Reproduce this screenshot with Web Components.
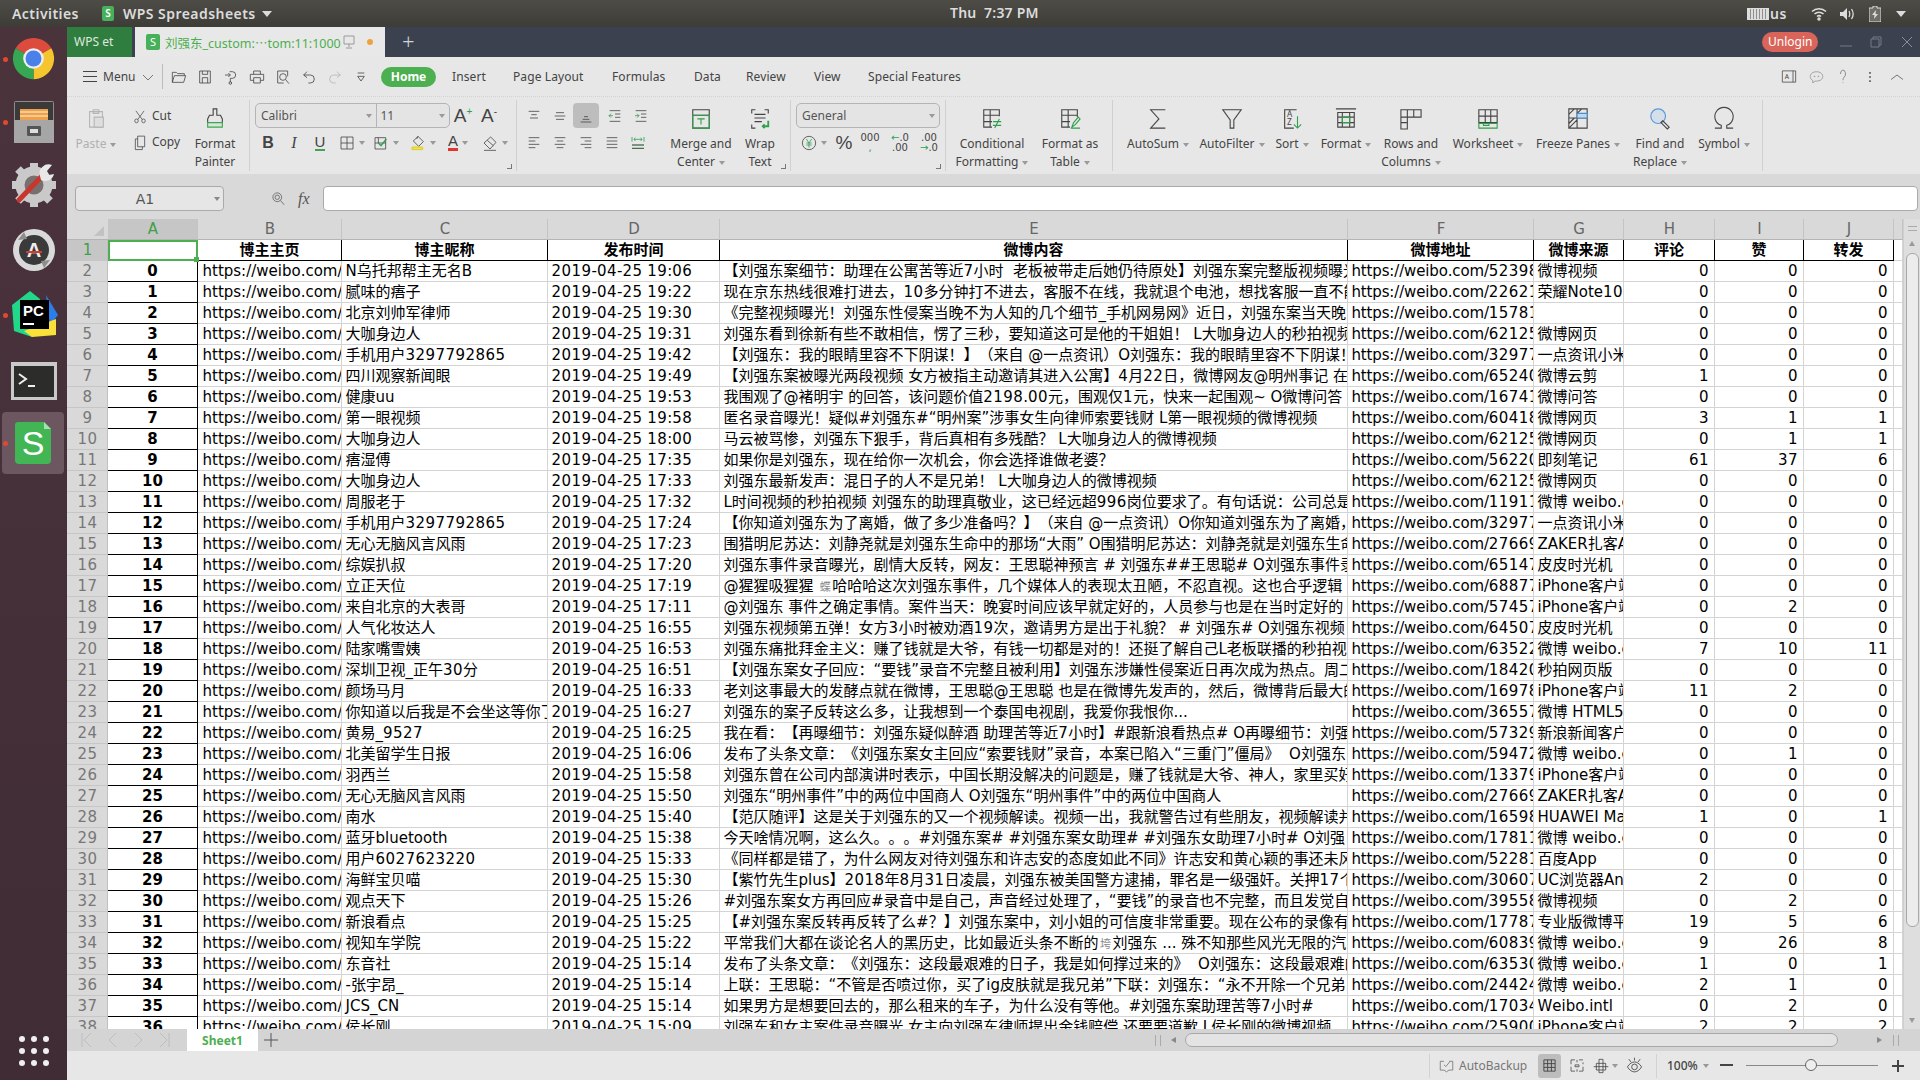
<!DOCTYPE html>
<html lang="zh">
<head>
<meta charset="utf-8">
<title>WPS Spreadsheets</title>
<style>
  html, body { margin: 0; width: 1920px; height: 1080px; overflow: hidden; background: #e7e7e7; }
  .screen { display: flex; height: 1053px; }
  .app { display: flex; flex-direction: column; width: 1853px; }
</style>
</head>
<body>
<desktop-bar></desktop-bar>
<div class="screen">
  <app-launcher></app-launcher>
  <div class="app">
    <tab-strip></tab-strip>
    <quick-bar></quick-bar>
    <wps-ribbon></wps-ribbon>
    <formula-bar></formula-bar>
    <sheet-view></sheet-view>
    <sheet-tabs></sheet-tabs>
    <status-bar></status-bar>
  </div>
</div>
<script>
const UI_FONT = `"Noto Sans", "Noto Sans CJK SC", sans-serif`;
const CELL_FONT = `"DejaVu Sans", "Noto Sans CJK SC", sans-serif`;
const GREEN = '#4caf50';

const ICONS = {
  open: '<path d="M2 20V5h6l2 2h10v3M2 20l3-10h17l-3 10z"/>',
  save: '<path d="M4 3h16v18H4zM8 3v5h8V3M8 21v-8h8v8"/>',
  saveas: '<path d="M10 4h4a5 5 0 0 1 0 10h-3v6M3 9h8M8 6l3 3-3 3"/><circle cx="11" cy="21" r="2"/>',
  print: '<path d="M7 8V3h10v5M7 17H2V8h20v9h-5M7 13h10v8H7z"/>',
  preview: '<path d="M19 11V3H4v18h9"/><circle cx="12" cy="12" r="5"/><path d="M16 16l5 6"/>',
  undo: '<path d="M9 4L4 9l5 4M4 9h10a5 5 0 0 1 0 12h-3"/>',
  redo: '<path d="M15 4l5 5-5 4M20 9H10a5 5 0 0 0 0 12h3"/>',
  qat: '<path d="M7 6h10M7 11h10l-5 7z"/>',
  paste: '<path d="M5 5h14v17H5zM9 3h6v4H9z" stroke="#b5b5b5"/><path d="M10 11h10v11H10z" fill="#dedede" stroke="#b5b5b5"/>',
  cut: '<circle cx="6" cy="19" r="3"/><circle cx="18" cy="19" r="3"/><path d="M8 17L19 3M16 17L5 3"/>',
  copy: '<path d="M8 3h12v15H8z"/><path d="M8 7H4v15h12v-4"/>',
  brush: '<path d="M10 2h4v7h4l2 4v4H4v-4l2-4h4z"/><path d="M4 17h16v5H4z" fill="#d5e8d6" stroke="#3fa554"/>',
  merge: '<path d="M3 3h18v20H3zM3 9h18"/><path d="M3 9h18v14H3z" stroke="#2fa04c"/><path d="M8 13h8M12 13v6" stroke="#2fa04c"/>',
  wrap: '<path d="M3 7V3h4M17 3h4v4M3 19v4h4M6 8h12M6 12h12M6 16h8"/><path d="M21 15v6h-6M17 19l-2 2 2 2" stroke="#2fa04c" stroke-width="2"/>',
  cond: '<path d="M20 10V3H3v19h9M3 9h17M10 3v19M3 16h9"/><path d="M13 16h9M13 20h9M20 13l-5 10" stroke="#2fa04c"/>',
  table: '<path d="M20 11V3H3v19h9M3 9h17M10 3v19M3 16h9"/><path d="M14 22l2-5 5-6 2 2-5 6zM13 23h10" stroke="#2fa04c"/>',
  sum: '<path d="M20 3H4l9 10-9 10h16"/>',
  filter: '<path d="M2 3h20l-8 11v9h-4V14z"/>',
  sort: '<path d="M17 3H4v20h10"/><text x="6.5" y="11" font-size="9" stroke="none" fill="#444">A</text><text x="6.5" y="20" font-size="9" stroke="none" fill="#444">Z</text><path d="M18 10v13M14 19l4 4 4-4" stroke="#2fa04c"/>',
  format: '<path d="M1 2h22M3 6h18v16H3zM3 11h18M3 17h18M8 6v16M16 6v16"/><path d="M8 11h8v6H8z" stroke="#2fa04c"/>',
  rows: '<path d="M1 3h22v8H8v13H1zM1 11h7M1 17h7M8 3v8M15 3v8"/>',
  sheet: '<path d="M2 3h20v14H2zM2 10h20M9 3v14M15 3v14"/><path d="M2 18h20v5H2zM7 18v2h6v-2" stroke="#2fa04c"/>',
  freeze: '<path d="M2 2h20v21H2zM2 12h20M11 2v21M2 8l6-6M11 7l5-5M2 18l6-6M2 23l9-9"/><path d="M11 7h11v5H11z" fill="#bfd8ee" stroke="#4a90d0"/>',
  find: '<circle cx="10" cy="10" r="8" fill="#d5dfea" stroke="#5a9ad6" stroke-width="1.3"/><path d="M15 15l7 7-2 2-7-7z"/>',
  symbol: '<path d="M2 23h7v-3a10 10 0 1 1 6 0v3h7"/>',
  borders: '<path d="M3 3h18v18H3zM12 3v18M3 12h18"/>',
  fillcolor: '<path d="M3 4h16v17H3zM3 12h16"/><path d="M8 12l4 4 8-10" stroke="#2fa04c" stroke-width="2"/><path d="M8 4v8"/>',
  bucket: '<path d="M12 2l8 8-7 7-8-8zM12 2l-2 4"/><path d="M3 18h16v4H3z" fill="#f1e23a" stroke="#d8c92a"/>',
  eraser: '<path d="M13 3l8 8-9 10-9-9zM8 8l9 8M3 23h18"/>',
  align1: '<path d="M4 4h16M8 9h8M6 14h12" transform="translate(0 1)"/>',
  align2: '<path d="M6 7h12M4 12h16M6 17h12"/>',
  align3: '<path d="M9 13h6M7 17h10M4 21h16"/>',
  indentL: '<path d="M4 4h16M12 9h8M12 14h8M4 20h16"/><path d="M9 11.500H3M6 8.500l-3 3 3 3" stroke="#2fa04c"/>',
  indentR: '<path d="M4 4h16M4 20h16M12 9h8M12 14h8"/><path d="M3 11.500h6M6 8.500l3 3-3 3" stroke="#2fa04c"/>',
  left: '<path d="M4 4h16M4 9h10M4 14h16M4 19h10"/>',
  center: '<path d="M4 4h16M7 9h10M4 14h16M7 19h10"/>',
  right: '<path d="M4 4h16M10 9h10M4 14h16M10 19h10"/>',
  just: '<path d="M4 4h16M4 9h16M4 14h16M4 19h16"/>',
  dist: '<path d="M3 15h18M3 20h18M3 3v7M21 3v7M6 6.500h12M8 4l-2 2.500L8 9M16 4l2 2.500L16 9" stroke="#2fa04c"/><path d="M3 15h18M3 20h18"/>',
  yen: '<circle cx="12" cy="12" r="10"/><path d="M8 6l4 6 4-6M12 12v7M8 12h8M8 15h8" stroke="#2fa04c"/>',
  zoomf: '<circle cx="10" cy="10" r="7"/><circle cx="10" cy="10" r="3.500"/><path d="M15 15l6 7"/>',
  note: '<path d="M2 3h20v18H2zM18 3v18"/><text x="5.500" y="16" font-size="10" stroke="none" fill="#444">A</text>',
  chat: '<path d="M12 3c6 0 10 3.500 10 8s-4 8-10 8H10l-4 3v-4c-2.500-1.500-4-4-4-7 0-4.500 4-8 10-8z"/><circle cx="9" cy="11" r=".7"/><circle cx="15" cy="11" r=".7"/>',
  collapse: '<path d="M3 17l9-9 9 9"/>',
  dotsv: '<circle cx="12" cy="5" r="1" fill="#444"/><circle cx="12" cy="12" r="1" fill="#444"/><circle cx="12" cy="19" r="1" fill="#444"/>',
  question: '<path d="M6 8a6 6 0 1 1 9 5c-2 1.300-3 2.500-3 5M12 21.500v1"/>',
  backup: '<path d="M8 4H2v15h6l4 3 4-3h6V4h-6"/><path d="M8 10l3 3 6-8" />',
  gridview: '<path d="M3 3h18v18H3zM3 9h18M3 15h18M9 3v18M15 3v18" stroke-width="1.500"/>',
  pagebreak: '<path d="M9 3H3v7M15 3h6M21 7v3M3 14v7h6M15 21h6v-7M9 11h6v3H9zM12 3v4M12 18v4"/>',
  pageview: '<path d="M5 8h14v10H5zM9 2h6v20H9zM1 13h22"/>',
  eye: '<path d="M2 14c3-5 7-7 10-7s7 2 10 7c-3 5-7 7-10 7s-7-2-10-7z"/><circle cx="12" cy="14" r="4"/><path d="M4 3l3 4M12 1v4M20 3l-3 4"/>'
};

// stroked svg icon from the table above
function icon(name, w = 16, h = w, color = '#444') {
  return `<svg width="${w}" height="${h}" viewBox="0 0 24 24" preserveAspectRatio="none" fill="none" stroke="${color}" stroke-width="1.200" style="display:block;overflow:visible">${ICONS[name]}</svg>`;
}

const CARET_CSS = `.caret { display: inline-block; width: 0; height: 0; border: 3px solid transparent; border-top: 4px solid #9a9a9a; border-bottom: 0; margin-left: 4px; vertical-align: middle; }`;

class DesktopBar extends HTMLElement {
  constructor() {
    super();
    this.attachShadow({ mode: 'open' }).innerHTML = `
      <style>
        :host { display: flex; align-items: center; height: 27px; background: linear-gradient(#4e4c46, #3d3c37); color: #dcdcdc; font: 600 14px ${UI_FONT}; letter-spacing: .45px; }
        .activities { margin-left: 12px; width: 90px; }
        .logo { width: 12px; height: 15px; background: #46b05a; border-radius: 2px; color: #fff; font-size: 10px; line-height: 15px; text-align: center; letter-spacing: 0; }
        .name { margin-left: 9px; }
        .drop { width: 0; height: 0; border: 5px solid transparent; border-top: 6px solid #dcdcdc; border-bottom: 0; margin-left: 6px; }
        .clock { position: absolute; left: 950px; top: 0; line-height: 25px; white-space: pre; letter-spacing: .2px; }
        .tray { margin-left: auto; display: flex; align-items: center; margin-right: 14px; }
        .keys { width: 22px; height: 12px; background: repeating-linear-gradient(90deg, #ddd 0 2px, #8f8f8f 2px 3px); border: 1px solid #ddd; box-sizing: border-box; }
        .us { width: 41px; margin-left: 1px; }
        svg { display: block; }
      </style>
      <span class="activities">Activities</span>
      <span class="logo">S</span>
      <span class="name">WPS Spreadsheets</span>
      <span class="drop"></span>
      <span class="clock">Thu  7:37 PM</span>
      <div class="tray">
        <span class="keys"></span><span class="us">us</span>
        <svg width="16" height="14" viewBox="0 0 16 14" fill="none" stroke="#ddd" stroke-width="1.500" style="margin-right:12px"><path d="M1 4.500a10 10 0 0 1 14 0M3.500 7a6.500 6.500 0 0 1 9 0M6 9.500a3 3 0 0 1 4 0"/><circle cx="8" cy="12" r="1" fill="#ddd"/></svg>
        <svg width="16" height="14" viewBox="0 0 16 14" style="margin-right:14px"><path d="M1 5h3l4-4v12l-4-4H1z" fill="#ddd"/><path d="M10 4c1 2 1 4 0 6M12.500 2c2 3 2 7 0 10" fill="none" stroke="#ddd" stroke-width="1.300"/></svg>
        <svg width="12" height="16" viewBox="0 0 12 16" style="margin-right:14px"><path d="M4 0h4v2h4v14H0V2h4z" fill="#6f6e69" stroke="#ddd"/><path d="M7 4L3 9h2.500L5 13l4-5H6.500z" fill="#ddd"/></svg>
        <span class="drop" style="margin:0 0 0 1px"></span>
      </div>`;
  }
}

const LAUNCHER_ICONS = [
  { dot: true, tall: 63, svg: `<svg width="45" height="45" viewBox="0 0 48 48"><path d="M24 24L5 13A22 22 0 0 1 43 13z" fill="#dd4b3d"/><path d="M24 24L43 13A22 22 0 0 1 24 46z" fill="#f5c52f"/><path d="M24 24V46A22 22 0 0 1 5 13z" fill="#36a853"/><circle cx="24" cy="24" r="11" fill="#eee"/><circle cx="24" cy="24" r="8.500" fill="#4a80ea"/></svg>` },
  { dot: true, tall: 63, svg: `<svg width="44" height="44" viewBox="0 0 44 44"><rect x="2" y="1" width="40" height="42" rx="2" fill="#8c8c8c"/><rect x="3" y="2" width="38" height="18" fill="#3b3a38"/><rect x="8" y="9" width="28" height="11" fill="#efa04b"/><path d="M8 12h28M8 16h28" stroke="#fff2dc"/><rect x="2" y="20" width="40" height="23" fill="#a6a6a6"/><rect x="15" y="26" width="14" height="10" rx="1" fill="#555"/><rect x="18" y="29" width="8" height="4" fill="#ddd"/></svg>` },
  { tall: 64, svg: `<svg width="46" height="46" viewBox="0 0 46 46"><g stroke="#c9c9c9" stroke-width="8"><path d="M23 1v8M23 37v8M1 23h8M37 23h8M7 7l6 6M33 33l6 6M7 39l6-6"/></g><circle cx="23" cy="23" r="14" fill="#77706f" stroke="#c9c9c9" stroke-width="9"/><path d="M8 38L31 14" stroke="#c8372d" stroke-width="5" stroke-linecap="round"/><path d="M29 14a9 9 0 0 1 12-11l-5 6 2 4 5-1a9 9 0 0 1-13 6z" fill="#e8e8e8"/></svg>` },
  { tall: 66, svg: `<svg width="44" height="44" viewBox="0 0 44 44"><circle cx="22" cy="22" r="21" fill="#d9d9d9"/><circle cx="22" cy="22" r="15" fill="#3b3a3a"/><path d="M6 12l6-8 3 7zM38 32l-6 8-3-7z" fill="#8d8d8d"/><text x="22" y="29" text-anchor="middle" fill="#eee" font-family="Liberation Sans" font-weight="700" font-size="20">A</text><path d="M14 24h16" stroke="#d9382e" stroke-width="2"/></svg>` },
  { dot: true, tall: 64, svg: `<svg width="48" height="48" viewBox="0 0 48 48"><path d="M2 14L20 0l10 8-8 38L4 40z" fill="#21d789"/><path d="M36 4l12 20-8 10z" fill="#2b7de9"/><path d="M14 40l32-12v16l-24 2z" fill="#f9e13a"/><rect x="10" y="9" width="29" height="29" fill="#000"/><text x="13" y="25" fill="#fff" font-family="Liberation Sans" font-weight="700" font-size="15">PC</text><path d="M13 33h11" stroke="#fff" stroke-width="2"/></svg>` },
  { tall: 65, nudge: 3, svg: `<svg width="46" height="38" viewBox="0 0 46 38"><rect x="0" y="0" width="46" height="38" fill="#c9c9c9"/><rect x="3" y="4" width="40" height="31" fill="#2c2c2a"/><path d="M8 12l7 5-7 5" fill="none" stroke="#eee" stroke-width="2"/><path d="M17 24h7" stroke="#eee" stroke-width="2"/></svg>` },
  { active: true, dot: true, tall: 62, svg: `<svg width="36" height="42" viewBox="0 0 36 42"><path d="M3 0h26l7 7v31a4 4 0 0 1-4 4H4a4 4 0 0 1-4-4V3a3 3 0 0 1 3-3z" fill="#42b554"/><path d="M29 0l7 7h-7z" fill="#a7e0af"/><text x="18" y="33" text-anchor="middle" fill="#fff" font-family="Liberation Sans" font-size="34">S</text></svg>` }
];

class AppLauncher extends HTMLElement {
  constructor() {
    super();
    const items = LAUNCHER_ICONS.map((item) => `
      <div class="slot ${item.active ? 'active' : ''}" style="height:${item.tall}px;box-sizing:border-box;padding-top:${item.nudge || 0}px">
        ${item.dot ? '<i class="dot"></i>' : ''}${item.svg}
      </div>`).join('');
    this.attachShadow({ mode: 'open' }).innerHTML = `
      <style>
        :host { display: flex; flex-direction: column; width: 67px; flex: none; background: linear-gradient(#4b333c, #3f2c35); }
        .slot { position: relative; display: flex; align-items: center; justify-content: center; }
        .active { margin: 0 3px 0 2px; background: #6c5660; border-radius: 4px; }
        .dot { position: absolute; left: 3px; top: 50%; width: 5px; height: 5px; margin-top: -2px; border-radius: 50%; background: #e0492f; }
        .active .dot { left: 1px; }
        .apps { margin-top: auto; margin-bottom: 14px; display: grid; grid-template-columns: repeat(3, 6px); gap: 6px; justify-content: center; }
        .apps i { width: 6px; height: 6px; border-radius: 50%; background: #efefef; }
      </style>
      ${items}
      <div class="apps">${'<i></i>'.repeat(9)}</div>`;
  }
}

class TabStrip extends HTMLElement {
  constructor() {
    super();
    this.attachShadow({ mode: 'open' }).innerHTML = `
      <style>
        :host { display: flex; align-items: stretch; height: 30px; flex: none; background: #3c4150; font: 12px ${UI_FONT}; }
        .et { width: 65px; background: #2f7d3f; color: #dfe9df; line-height: 30px; padding-left: 7px; box-sizing: border-box; }
        .doc { display: flex; align-items: center; width: 250px; margin-left: 3px; background: #e8e8e8; color: ${GREEN}; padding-left: 11px; box-sizing: border-box; }
        .file { width: 14px; height: 16px; border-radius: 2px; background: #46b05a; color: #fff; font-size: 11px; line-height: 16px; text-align: center; margin-right: 5px; }
        .title { width: 177px; white-space: nowrap; overflow: hidden; font-size: 12.500px; }
        .dot { width: 6px; height: 6px; border-radius: 50%; background: #eea23f; margin-left: 11px; }
        .plus { width: 1px; margin-left: 17px; color: #cfd2d8; font-size: 22px; font-weight: 300; line-height: 28px; }
        .right { margin-left: auto; display: flex; align-items: center; margin-right: 7px; }
        .pill { background: #d9645a; color: #fff; border-radius: 10px; height: 20px; line-height: 20px; padding: 0 6px; width: 44px; text-align: center; margin-right: 22px; }
        svg { display: block; }
      </style>
      <div class="et">WPS et</div>
      <div class="doc">
        <span class="file">S</span>
        <span class="title">刘强东_custom:⋯tom:11:1000</span>
        <svg width="14" height="14" viewBox="0 0 14 14" fill="none" stroke="#9a9a9a"><path d="M2 1h10v8H2zM7 9v3M4 13h6"/></svg>
        <span class="dot"></span>
      </div>
      <div class="plus">+</div>
      <div class="right">
        <span class="pill">Unlogin</span>
        <svg width="12" height="12" viewBox="0 0 12 12" stroke="#747a85" fill="none" style="margin-right:18px"><path d="M0 10h12"/></svg>
        <svg width="12" height="12" viewBox="0 0 12 12" stroke="#747a85" fill="none" style="margin-right:19px"><path d="M1 3h8v8H1zM3 3V1h8v8H9"/></svg>
        <svg width="12" height="12" viewBox="0 0 12 12" stroke="#8a8f99" fill="none"><path d="M1 1l10 10M11 1L1 11"/></svg>
      </div>`;
  }
}

class QuickBar extends HTMLElement {
  constructor() {
    super();
    const quick = ['open', 'save', 'saveas', 'print', 'preview', 'undo', 'redo', 'qat'].map((name) =>
      `<span class="q">${icon(name, 16, 16, name === 'redo' ? '#b5b5b5' : '#444')}</span>`).join('');
    const tabs = [['Insert', 33, 16], ['Page Layout', 72, 28], ['Formulas', 54, 27], ['Data', 34, 28], ['Review', 42, 18], ['View', 27, 26], ['Special Features', 95, 27]]
      .map(([label, w, ml]) => `<span class="tab" style="width:${w}px;margin-left:${ml}px">${label}</span>`).join('');
    this.attachShadow({ mode: 'open' }).innerHTML = `
      <style>
        :host { display: flex; align-items: center; height: 40px; box-sizing: border-box; flex: none; background: #e7e7e7; border-bottom: 1px dotted #d2d2d2; color: #444; font: 12px ${UI_FONT}; }
        .burger { width: 14px; height: 11px; margin-left: 16px; border-top: 1px solid #444; border-bottom: 1px solid #444; position: relative; box-sizing: border-box; }
        .burger::after { content: ""; position: absolute; left: 0; right: 0; top: 4px; height: 1px; background: #444; }
        .menu { margin-left: 6px; width: 32px; }
        .chev { margin-left: 8px; width: 12px; }
        .sep { width: 1px; height: 25px; background: #bcbcbc; margin-left: 7px; margin-right: 3px; }
        .q { width: 26px; display: flex; justify-content: center; }
        .home { margin-left: 7px; width: 55px; height: 20px; border-radius: 10px; background: ${GREEN}; color: #fff; font-weight: 700; line-height: 20px; text-align: center; }
        .tab { white-space: nowrap; letter-spacing: .1px; }
        .right { margin-left: auto; display: flex; align-items: center; margin-right: 15px; gap: 11px; }
        .right span { width: 16px; display: flex; justify-content: center; }
      </style>
      <span class="burger"></span>
      <span class="menu">Menu</span>
      <span class="chev"><svg width="10" height="6" viewBox="0 0 10 6" fill="none" stroke="#777"><path d="M0 0l5 5 5-5"/></svg></span>
      <span class="sep"></span>
      ${quick}
      <span class="home">Home</span>
      ${tabs}
      <div class="right">
        <span>${icon('note', 16, 15)}</span>
        <span>${icon('chat', 15, 14, '#888')}</span>
        <span>${icon('question', 10, 15, '#555')}</span>
        <span>${icon('dotsv', 14, 14)}</span>
        <span>${icon('collapse', 16, 12)}</span>
      </div>`;
  }
}

class RbGroup extends HTMLElement {
  constructor() {
    super();
    this.attachShadow({ mode: 'open' }).innerHTML = `
      <style>
        :host { display: flex; position: relative; box-sizing: border-box; height: 71px; margin-top: 3px; border-right: 1px solid #d0d0d0; flex: none; }
        .corner { position: absolute; right: 4px; bottom: 2px; width: 4px; height: 4px; border-right: 1px solid #777; border-bottom: 1px solid #777; }
      </style>
      <slot></slot><i class="corner"></i>`;
  }
  connectedCallback() {
    this.style.width = this.getAttribute('w') + 'px';
    this.style.paddingLeft = (this.getAttribute('pad') || 0) + 'px';
    this.shadowRoot.querySelector('.corner').style.display = this.hasAttribute('corner') ? 'block' : 'none';
  }
}

class RbBig extends HTMLElement {
  constructor() {
    super();
    this.attachShadow({ mode: 'open' }).innerHTML = `
      <style>
        :host { display: flex; flex-direction: column; align-items: center; flex: none; color: #444; font: 12px/18px ${UI_FONT}; text-align: center; }
        .ico { height: 26px; padding-top: 7px; margin-bottom: 2px; display: flex; justify-content: center; }
        .label { white-space: nowrap; }
        ${CARET_CSS}
      </style>
      <div class="ico"></div>
      <div class="label"><slot></slot><i class="caret"></i></div>`;
  }
  connectedCallback() {
    this.style.width = this.getAttribute('w') + 'px';
    const size = (this.getAttribute('size') || '22').split(',');
    this.shadowRoot.querySelector('.ico').innerHTML = icon(this.getAttribute('icon'), +size[0], +(size[1] || size[0]));
    if (!this.hasAttribute('caret')) this.shadowRoot.querySelector('.caret').style.display = 'none';
  }
}

class RbTool extends HTMLElement {
  constructor() {
    super();
    this.attachShadow({ mode: 'open' }).innerHTML = `
      <style>
        :host { display: flex; align-items: center; justify-content: center; height: 25px; flex: none; box-sizing: border-box; color: #444; font: 14px ${CELL_FONT}; }
        :host([active]) { background: #bdbdbd; border-radius: 4px; }
        ${CARET_CSS}
      </style>
      <span class="ico"></span><slot></slot><i class="caret"></i>`;
  }
  connectedCallback() {
    this.style.width = this.getAttribute('w') + 'px';
    const ml = this.getAttribute('ml');
    if (ml) this.style.marginLeft = ml + 'px';
    const name = this.getAttribute('icon');
    const size = +(this.getAttribute('size') || 16);
    if (name) this.shadowRoot.querySelector('.ico').innerHTML = icon(name, size);
    if (!this.hasAttribute('caret')) this.shadowRoot.querySelector('.caret').style.display = 'none';
  }
}

class RbCombo extends HTMLElement {
  constructor() {
    super();
    this.attachShadow({ mode: 'open' }).innerHTML = `
      <style>
        :host { display: flex; box-sizing: border-box; height: 25px; border: 1px solid #b4b4b4; border-radius: 5px; background: #e4e4e4; color: #555; font: 12px/23px ${UI_FONT}; flex: none; }
        .part { display: flex; align-items: center; justify-content: space-between; padding: 0 4px 0 5px; box-sizing: border-box; }
        .part + .part { border-left: 1px solid #b4b4b4; padding-left: 3px; }
        ${CARET_CSS}
      </style>
      <div class="parts" style="display:contents"></div>`;
  }
  connectedCallback() {
    this.style.width = this.getAttribute('w') + 'px';
    const parts = this.getAttribute('parts').split('|');
    this.shadowRoot.querySelector('.parts').innerHTML = parts.map((part) => {
      const [text, w] = part.split(':');
      return `<div class="part" style="width:${w}px"><span>${text}</span><i class="caret"></i></div>`;
    }).join('');
  }
}

class WpsRibbon extends HTMLElement {
  constructor() {
    super();
    this.attachShadow({ mode: 'open' }).innerHTML = `
      <style>
        :host { display: flex; height: 77px; flex: none; background: #e7e7e7; font: 12px/18px ${UI_FONT}; color: #444; }
        .col { display: flex; flex-direction: column; }
        .row { display: flex; align-items: center; }
        .row2 { margin-top: 2px; height: 25px; }
        .t6 { padding-top: 3px; }
        .cutcopy { margin-left: 18px; width: 60px; padding-top: 6px; gap: 6px; }
        .cutcopy .row { height: 20px; gap: 5px; }
        .paste { width: 38px; color: #b0b0b0; }
        .big-a { font: 19px "Liberation Sans", sans-serif; color: #444; }
        .big-a sup { font-size: 10px; color: #2fa04c; line-height: 0; }
        .tiny { font: 10px/10px ${CELL_FONT}; text-align: center; color: #444; }
        .tiny b { color: #2fa04c; font-weight: 400; }
      </style>
      <rb-group w="183" pad="10">
        <rb-big class="paste" w="38" icon="paste" caret style="color:#b0b0b0">Paste</rb-big>
        <div class="col cutcopy">
          <div class="row">${icon('cut', 14, 15)}<span>Cut</span></div>
          <div class="row">${icon('copy', 14, 17)}<span>Copy</span></div>
        </div>
        <rb-big w="44" icon="brush">Format<br>Painter</rb-big>
      </rb-group>
      <rb-group w="267" pad="5" corner>
        <div class="col t6">
          <div class="row">
            <rb-combo w="195" parts="Calibri:121|11:73"></rb-combo>
            <rb-tool class="big-a" w="26"><span class="big-a">A<sup>+</sup></span></rb-tool>
            <rb-tool class="big-a" w="26"><span class="big-a">A<sup style="color:#444">-</sup></span></rb-tool>
          </div>
          <div class="row row2">
            <rb-tool w="26" style="font:700 16px 'Liberation Sans'">B</rb-tool>
            <rb-tool w="26" style="font:italic 16px 'Liberation Serif'">I</rb-tool>
            <rb-tool w="26" style="font:15px 'Liberation Sans'"><span style="border-bottom:2px solid #3fa554;line-height:15px">U</span></rb-tool>
            <rb-tool w="28" ml="5" icon="borders" caret></rb-tool>
            <rb-tool w="28" ml="6" icon="fillcolor" caret></rb-tool>
            <rb-tool w="28" ml="9" icon="bucket" caret></rb-tool>
            <rb-tool w="28" ml="7" caret style="font:15px 'Liberation Sans'"><span style="border-bottom:3px solid #e0362c;line-height:14px">A</span></rb-tool>
            <rb-tool w="28" ml="9" icon="eraser" caret></rb-tool>
          </div>
        </div>
      </rb-group>
      <rb-group w="274" pad="4" corner>
        <div class="col t6" style="width:148px">
          <div class="row">
            <rb-tool w="26" icon="align1"></rb-tool><rb-tool w="26" icon="align2"></rb-tool><rb-tool w="26" icon="align3" active></rb-tool>
            <rb-tool w="26" ml="3" icon="indentL"></rb-tool><rb-tool w="26" icon="indentR"></rb-tool>
          </div>
          <div class="row row2">
            <rb-tool w="26" icon="left"></rb-tool><rb-tool w="26" icon="center"></rb-tool><rb-tool w="26" icon="right"></rb-tool>
            <rb-tool w="26" icon="just"></rb-tool><rb-tool w="26" icon="dist"></rb-tool>
          </div>
        </div>
        <rb-big w="66" icon="merge" caret style="margin-left:-1px">Merge and<br>Center</rb-big>
        <rb-big w="40" icon="wrap" style="margin-left:6px">Wrap<br>Text</rb-big>
      </rb-group>
      <rb-group w="155" pad="5" corner>
        <div class="col t6">
          <rb-combo w="144" parts="General:142"></rb-combo>
          <div class="row row2">
            <rb-tool w="28" ml="4" icon="yen" caret></rb-tool>
            <rb-tool w="26" ml="3" style="font:19px 'Liberation Sans'">%</rb-tool>
            <rb-tool w="26"><span class="tiny">000<br><b>,</b></span></rb-tool>
            <rb-tool w="30" ml="2"><span class="tiny"><b>←</b>.0<br>.00</span></rb-tool>
            <rb-tool w="28"><span class="tiny">.00<br><b>→</b>.0</span></rb-tool>
          </div>
        </div>
      </rb-group>
      <rb-group w="167" pad="6">
        <rb-big w="80" icon="cond" caret>Conditional<br>Formatting</rb-big>
        <rb-big w="76" icon="table" caret>Format as<br>Table</rb-big>
      </rb-group>
      <rb-group w="650" pad="5">
        <rb-big w="80" icon="sum" caret>AutoSum</rb-big>
        <rb-big w="68" icon="filter" caret>AutoFilter</rb-big>
        <rb-big w="52" icon="sort" caret>Sort</rb-big>
        <rb-big w="56" icon="format" caret>Format</rb-big>
        <rb-big w="74" icon="rows" caret>Rows and<br>Columns</rb-big>
        <rb-big w="80" icon="sheet" caret>Worksheet</rb-big>
        <rb-big w="100" icon="freeze" caret>Freeze Panes</rb-big>
        <rb-big w="64" icon="find" caret>Find and<br>Replace</rb-big>
        <rb-big w="64" icon="symbol" caret>Symbol</rb-big>
      </rb-group>`;
  }
}

class FormulaBar extends HTMLElement {
  constructor() {
    super();
    this.attachShadow({ mode: 'open' }).innerHTML = `
      <style>
        :host { display: flex; align-items: center; height: 45px; flex: none; padding-top: 4px; box-sizing: border-box; background: #d9d9d9; color: #555; font: 14px ${UI_FONT}; }
        .name { display: flex; align-items: center; box-sizing: border-box; width: 149px; height: 25px; margin-left: 8px; border: 1px solid #aaa; border-radius: 4px; background: #e6e6e6; position: relative; }
        .name span { flex: 1; text-align: center; font: 14px ${CELL_FONT}; color: #555; }
        .name i { width: 0; height: 0; border: 3px solid transparent; border-top: 4px solid #888; border-bottom: 0; margin-right: 3px; }
        .zoom { margin-left: 47px; }
        .fx { margin-left: 12px; width: 25px; font: italic 16px "Liberation Serif", serif; }
        .input { flex: 1; height: 25px; margin-right: 2px; box-sizing: border-box; background: #fff; border: 1px solid #aaa; border-radius: 4px; }
      </style>
      <div class="name"><span>A1</span><i></i></div>
      <span class="zoom">${icon('zoomf', 15, 15, '#555')}</span>
      <span class="fx">fx</span>
      <div class="input"></div>`;
  }
}

const NICK = ['N乌托邦帮主无名B','腻味的痦子','北京刘帅军律师','大咖身边人','手机用户3297792865','四川观察新闻眼','健康uu','第一眼视频','大咖身边人','痦湿傅','大咖身边人','周服老于','手机用户3297792865','无心无脑风言风雨','综娱扒叔','立正天位','来自北京的大表哥','人气化妆达人','陆家嘴雪姨','深圳卫视_正午30分','颜场马月','你知道以后我是不会坐这等你了','黄易_9527','北美留学生日报','羽西兰','无心无脑风言风雨','南水','蓝牙bluetooth','用户6027623220','海鲜宝贝喵','观点天下','新浪看点','视知车学院','东音社','-张宇昂_','JCS_CN','侯长刚'];
const TIMES = '19:06 19:22 19:30 19:31 19:42 19:49 19:53 19:58 18:00 17:35 17:33 17:32 17:24 17:23 17:20 17:19 17:11 16:55 16:53 16:51 16:33 16:27 16:25 16:06 15:58 15:50 15:40 15:38 15:33 15:30 15:26 15:25 15:22 15:14 15:14 15:14 15:09'.split(' ');
const POSTS = [
  '【刘强东案细节：助理在公寓苦等近7小时  老板被带走后她仍待原处】刘强东案完整版视频曝光',
  '现在京东热线很难打进去，10多分钟打不进去，客服不在线，我就退个电池，想找客服一直不能',
  '《完整视频曝光！刘强东性侵案当晚不为人知的几个细节_手机网易网》近日，刘强东案当天晚',
  '刘强东看到徐新有些不敢相信，愣了三秒，要知道这可是他的干姐姐！ L大咖身边人的秒拍视频',
  '【刘强东：我的眼睛里容不下阴谋！】（来自 @一点资讯）O刘强东：我的眼睛里容不下阴谋！',
  '【刘强东案被曝光两段视频 女方被指主动邀请其进入公寓】4月22日，微博网友@明州事记 在',
  '我围观了@褚明宇 的回答，该问题价值2198.00元，围观仅1元，快来一起围观~ O微博问答',
  '匿名录音曝光！疑似#刘强东#“明州案”涉事女生向律师索要钱财 L第一眼视频的微博视频',
  '马云被骂惨，刘强东下狠手，背后真相有多残酷？ L大咖身边人的微博视频',
  '如果你是刘强东，现在给你一次机会，你会选择谁做老婆？',
  '刘强东最新发声：混日子的人不是兄弟！ L大咖身边人的微博视频',
  'L时间视频的秒拍视频 刘强东的助理真敬业，这已经远超996岗位要求了。有句话说：公司总是',
  '【你知道刘强东为了离婚，做了多少准备吗？】（来自 @一点资讯）O你知道刘强东为了离婚，',
  '围猎明尼苏达：刘静尧就是刘强东生命中的那场“大雨” O围猎明尼苏达：刘静尧就是刘强东生命',
  '刘强东事件录音曝光，剧情大反转，网友：王思聪神预言 # 刘强东##王思聪# O刘强东事件录',
  '@猩猩吸猩猩 <small>蝶</small>哈哈哈这次刘强东事件，几个媒体人的表现太丑陋，不忍直视。这也合乎逻辑',
  '@刘强东 事件之确定事情。案件当天：晚宴时间应该早就定好的，人员参与也是在当时定好的',
  '刘强东视频第五弹！女方3小时被劝酒19次，邀请男方是出于礼貌？ # 刘强东# O刘强东视频',
  '刘强东痛批拜金主义：赚了钱就是大爷，有钱一切都是对的！还挺了解自己L老板联播的秒拍视',
  '【刘强东案女子回应：“要钱”录音不完整且被利用】刘强东涉嫌性侵案近日再次成为热点。周二',
  '老刘这事最大的发酵点就在微博，王思聪@王思聪 也是在微博先发声的，然后，微博背后最大的',
  '刘强东的案子反转这么多，让我想到一个泰国电视剧，我爱你我恨你...',
  '我在看：【再曝细节：刘强东疑似醉酒 助理苦等近7小时】#跟新浪看热点# O再曝细节：刘强',
  '发布了头条文章：《刘强东案女主回应“索要钱财”录音，本案已陷入“三重门”僵局》  O刘强东',
  '刘强东曾在公司内部演讲时表示，中国长期没解决的问题是，赚了钱就是大爷、神人，家里买好',
  '刘强东“明州事件”中的两位中国商人 O刘强东“明州事件”中的两位中国商人',
  '【范仄随评】这是关于刘强东的又一个视频解读。视频一出，我就警告过有些朋友，视频解读并',
  '今天啥情况啊，这么久。。。#刘强东案# #刘强东案女助理# #刘强东女助理7小时# O刘强',
  '《同样都是错了，为什么网友对待刘强东和许志安的态度如此不同》许志安和黄心颖的事还未风',
  '【紫竹先生plus】2018年8月31日凌晨，刘强东被美国警方逮捕，罪名是一级强奸。关押17个',
  '#刘强东案女方再回应#录音中是自己，声音经过处理了，“要钱”的录音也不完整，而且发觉自',
  '【#刘强东案反转再反转了么#？】刘强东案中，刘小姐的可信度非常重要。现在公布的录像有',
  '平常我们大都在谈论名人的黑历史，比如最近头条不断的<small>垮</small>刘强东 ... 殊不知那些风光无限的汽',
  '发布了头条文章：《刘强东：这段最艰难的日子，我是如何撑过来的》  O刘强东：这段最艰难的',
  '上联：王思聪：“不管是否喷过你，买了ig皮肤就是我兄弟”下联：刘强东：“永不开除一个兄弟',
  '如果男方是想要回去的，那么租来的车子，为什么没有等他。#刘强东案助理苦等7小时#',
  '刘强东和女主案件录音曝光 女主向刘强东律师提出金钱赔偿 还要要道歉 L侯长刚的微博视频'
];
const IDS = '52398 22621 15781 62125 32977 65240 16741 60418 62125 56220 62125 11911 32977 27669 65147 68877 57457 64507 63522 18420 16978 36557 57329 59472 13379 27669 16598 17811 52281 30607 39558 17787 60839 63530 24424 17034 25900'.split(' ');
const SOURCES = ['微博视频','荣耀Note10','','微博网页','一点资讯小米','微博云剪','微博问答','微博网页','微博网页','即刻笔记','微博网页','微博 weibo.com','一点资讯小米','ZAKER扎客A','皮皮时光机','iPhone客户端','iPhone客户端','皮皮时光机','微博 weibo.com','秒拍网页版','iPhone客户端','微博 HTML5','新浪新闻客户端','微博 weibo.com','iPhone客户端','ZAKER扎客A','HUAWEI Mate','微博 weibo.com','百度App','UC浏览器An','微博视频','专业版微博平','微博 weibo.com','微博 weibo.com','微博 weibo.com','Weibo.intl','iPhone客户端'];
const COMMENTS = [0,0,0,0,0,1,0,3,0,61,0,0,0,0,0,0,0,0,7,0,11,0,0,0,0,0,1,0,0,2,0,19,9,1,2,0,2];
const LIKES = [0,0,0,0,0,0,0,1,1,37,0,0,0,0,0,0,2,0,10,0,2,0,0,1,0,0,0,0,0,0,2,5,26,0,1,2,2];
const SHARES = [0,0,0,0,0,0,0,1,1,6,0,0,0,0,0,0,0,0,11,0,0,0,0,0,0,0,1,0,0,0,0,6,8,1,0,0,2];
const HEADERS = ['博主主页','博主昵称','发布时间','微博内容','微博地址','微博来源','评论','赞','转发'];
const LETTERS = 'ABCDEFGHIJ'.split('');

// the reference has hinted digits, 10px wide; spread ours to the same pitch
const digits = (text) => String(text).replace(/\d+/g, '<span class="d">$&</span>');

class SheetView extends HTMLElement {
  constructor() {
    super();
    let cells = '<div class="corner"><i></i></div>';
    LETTERS.forEach((letter, i) => { cells += `<div class="col ${i === 0 ? 'sel' : ''}">${letter}</div>`; });
    cells += '<div class="col"></div>';
    // row 1 holds the header titles, A1 is empty
    cells += '<div class="rh sel">1</div><div class="c hd"></div>';
    HEADERS.forEach((title) => { cells += `<div class="c hd">${title}</div>`; });
    cells += '<div class="c"></div>';
    POSTS.forEach((post, i) => {
      cells += `<div class="rh">${digits(i + 2)}</div><div class="c idx">${i}</div>`
        + `<div class="c b">https://weibo.com/</div><div class="c">${digits(NICK[i])}</div><div class="c">${digits('2019-04-25 ' + TIMES[i])}</div>`
        + `<div class="c">${digits(post)}</div><div class="c"><span class="url">https://weibo.com/</span>${digits(IDS[i])}</div><div class="c">${digits(SOURCES[i])}</div>`
        + `<div class="c n">${digits(COMMENTS[i])}</div><div class="c n">${digits(LIKES[i])}</div><div class="c n">${digits(SHARES[i])}</div><div class="c"></div>`;
    });
    this.attachShadow({ mode: 'open' }).innerHTML = `
      <style>
        :host { display: flex; flex: 1; min-height: 0; overflow: hidden; background: #fff; font: 15px/21px ${CELL_FONT}; color: #000; text-spacing-trim: space-all; font-kerning: none; }
        .grid { position: relative; width: 1836px; flex: none; overflow: hidden; display: grid; grid-template-columns: 41px 90px 144px 206px 172px 628px 186px 90px 91px 89px 90px 9px; grid-auto-rows: 21px; align-content: start; }
        .col, .rh { background: #d9d9d9; color: #666; text-align: center; box-sizing: border-box; padding-left: 1px; }
        .col { border-bottom: 1px solid #b4b4b4; border-right: 1px solid #c4c4c4; }
        .col.sel { background: #c6c6c6; color: #3fa048; }
        .rh { border-bottom: 1px solid #c6c6c6; border-right: 1px solid #c0c0c0; color: #777; }
        .rh.sel { background: #c6c6c6; color: #3fa048; }
        .corner { background: #d9d9d9; border-bottom: 1px solid #b4b4b4; position: relative; }
        .corner i { position: absolute; right: 4px; bottom: 3px; width: 0; height: 0; border-left: 10px solid transparent; border-bottom: 10px solid #c2c2c2; }
        .c { box-sizing: border-box; overflow: hidden; white-space: pre; padding-left: 3.500px; border-bottom: 1px solid #d4d4d4; border-right: 1px solid #d4d4d4; }
        .c small { display: inline-block; width: 14px; text-align: center; font-size: 11px; color: #888; }
        .d { letter-spacing: .46px; }
        .url { letter-spacing: -.15px; }
        .b { padding-left: 4.500px; }
        .hd { border-bottom-color: #000; border-right-color: #000; font-weight: 700; text-align: center; padding: 0; }
        .idx { border-bottom-color: #000; border-right-color: #000; font-weight: 700; text-align: center; padding: 0; }
        .n { text-align: right; padding: 0 5px 0 0; }
        .cursor { position: absolute; left: 41px; top: 21px; width: 90px; height: 21px; box-sizing: border-box; border: 2px solid ${GREEN}; }
        .cursor::after { content: ""; position: absolute; right: -3px; bottom: -3px; width: 5px; height: 5px; background: ${GREEN}; border: 0; }
        .vbar { width: 17px; flex: none; background: #dedede; display: flex; flex-direction: column; align-items: center; box-sizing: border-box; border-left: 1px solid #cfcfcf; }
        .grip { height: 17px; width: 9px; box-sizing: border-box; padding-top: 7px; }
        .grip i { display: block; height: 3px; border-top: 1px solid #aaa; border-bottom: 1px solid #aaa; }
        .up { margin: 5px 0 7px; width: 0; height: 0; border: 3px solid transparent; border-bottom: 5px solid #999; border-top: 0; }
        .thumb { width: 13px; height: 674px; box-sizing: border-box; background: #ececec; border: 1px solid #a8a8a8; border-radius: 6px; }
        .down { margin-top: auto; margin-bottom: 6px; width: 0; height: 0; border: 3px solid transparent; border-top: 5px solid #999; border-bottom: 0; }
      </style>
      <div class="grid">${cells}<div class="cursor"></div></div>
      <div class="vbar"><div class="grip"><i></i></div><i class="up"></i><div class="thumb"></div><i class="down"></i></div>`;
  }
}

class SheetTabs extends HTMLElement {
  constructor() {
    super();
    this.attachShadow({ mode: 'open' }).innerHTML = `
      <style>
        :host { display: flex; align-items: stretch; height: 22px; flex: none; background: #d4d4d4; font: 700 12px ${UI_FONT}; }
        .nav { display: flex; align-items: center; width: 120px; padding-left: 14px; box-sizing: border-box; gap: 15px; }
        .nav svg { display: block; flex: none; }
        .tab { width: 71px; background: #fff; color: ${GREEN}; text-align: center; line-height: 23px; }
        .plus { margin-left: 6px; display: flex; align-items: center; }
        .h { margin-left: auto; width: 770px; display: flex; align-items: center; }
        .grip { width: 4px; height: 11px; margin-left: 5px; border-left: 1px solid #aaa; border-right: 1px solid #aaa; }
        .arr { width: 26px; height: 22px; display: flex; align-items: center; justify-content: center; }
        .arr.l { width: 24px; }
        .arr.r { width: 50px; justify-content: flex-end; padding-right: 6px; box-sizing: border-box; }
        .arr i { width: 0; height: 0; border: 3px solid transparent; }
        .thumb { width: 653px; height: 14px; box-sizing: border-box; background: #e3e3e3; border: 1px solid #a8a8a8; border-radius: 7px; }
      </style>
      <div class="nav">
        <svg width="11" height="14" viewBox="0 0 11 14" fill="none" stroke="#bdbdbd"><path d="M1 0v14M10 0L3 7l7 7"/></svg>
        <svg width="11" height="14" viewBox="0 0 11 14" fill="none" stroke="#bdbdbd"><path d="M9 0L2 7l7 7"/></svg>
        <svg width="11" height="14" viewBox="0 0 11 14" fill="none" stroke="#bdbdbd"><path d="M2 0l7 7-7 7"/></svg>
        <svg width="11" height="14" viewBox="0 0 11 14" fill="none" stroke="#bdbdbd"><path d="M10 0v14M1 0l7 7-7 7"/></svg>
      </div>
      <div class="tab">Sheet1</div>
      <div class="plus"><svg width="14" height="14" viewBox="0 0 14 14" stroke="#555" fill="none"><path d="M7 0v14M0 7h14"/></svg></div>
      <div class="h">
        <i class="grip"></i>
        <div class="arr l"><i style="border-right:5px solid #888;border-left:0"></i></div>
        <div class="thumb"></div>
        <div class="arr r"><i style="border-left:5px solid #888;border-right:0"></i></div>
        <i class="grip"></i>
      </div>`;
  }
}

class StatusBar extends HTMLElement {
  constructor() {
    super();
    this.attachShadow({ mode: 'open' }).innerHTML = `
      <style>
        :host { display: flex; align-items: center; height: 29px; flex: none; background: #e7e7e7; color: #666; font: 12px ${UI_FONT}; }
        .sep { width: 1px; height: 24px; background: #d2d2d2; }
        .btn { width: 23px; height: 24px; display: flex; align-items: center; justify-content: center; }
        .btn.on { background: #bdbdbd; border-radius: 3px; }
        .backup { color: #777; width: 69px; margin-left: 5px; margin-right: 10px; }
        .pct { width: 33px; margin-left: 10px; color: #444; font-weight: 500; }
        .drop { width: 0; height: 0; border: 3px solid transparent; border-top: 4px solid #999; border-bottom: 0; }
        .slider { position: relative; width: 132px; height: 1px; background: #888; margin-left: 13px; }
        .slider i { position: absolute; left: 59px; top: -6px; width: 12px; height: 12px; box-sizing: border-box; border: 1px solid #666; border-radius: 50%; background: #eee; }
        svg { display: block; flex: none; }
      </style>
      <span class="sep" style="margin-left:1362px;margin-right:9px"></span>
      ${icon('backup', 15, 14, '#666')}
      <span class="backup">AutoBackup</span>
      <span class="btn on">${icon('gridview', 15, 15)}</span>
      <span class="btn" style="margin-left:4px">${icon('pagebreak', 16, 15)}</span>
      <span class="btn" style="margin-left:1px">${icon('pageview', 16, 16)}</span>
      <span class="drop"></span>
      <span class="btn" style="margin-left:5px">${icon('eye', 17, 17)}</span>
      <span class="sep" style="margin-left:10px"></span>
      <span class="pct">100%</span>
      <span class="drop" style="margin-left:3px;margin-right:11px"></span>
      <svg width="13" height="3" viewBox="0 0 13 3"><rect width="13" height="2" fill="#444"/></svg>
      <span class="slider"><i></i></span>
      <svg width="12" height="12" viewBox="0 0 12 12" stroke="#444" stroke-width="2" style="margin-left:14px"><path d="M6 0v12M0 6h12"/></svg>`;
  }
}

customElements.define('desktop-bar', DesktopBar);
customElements.define('app-launcher', AppLauncher);
customElements.define('tab-strip', TabStrip);
customElements.define('quick-bar', QuickBar);
customElements.define('rb-group', RbGroup);
customElements.define('rb-big', RbBig);
customElements.define('rb-tool', RbTool);
customElements.define('rb-combo', RbCombo);
customElements.define('wps-ribbon', WpsRibbon);
customElements.define('formula-bar', FormulaBar);
customElements.define('sheet-view', SheetView);
customElements.define('sheet-tabs', SheetTabs);
customElements.define('status-bar', StatusBar);
</script>
</body>
</html>
